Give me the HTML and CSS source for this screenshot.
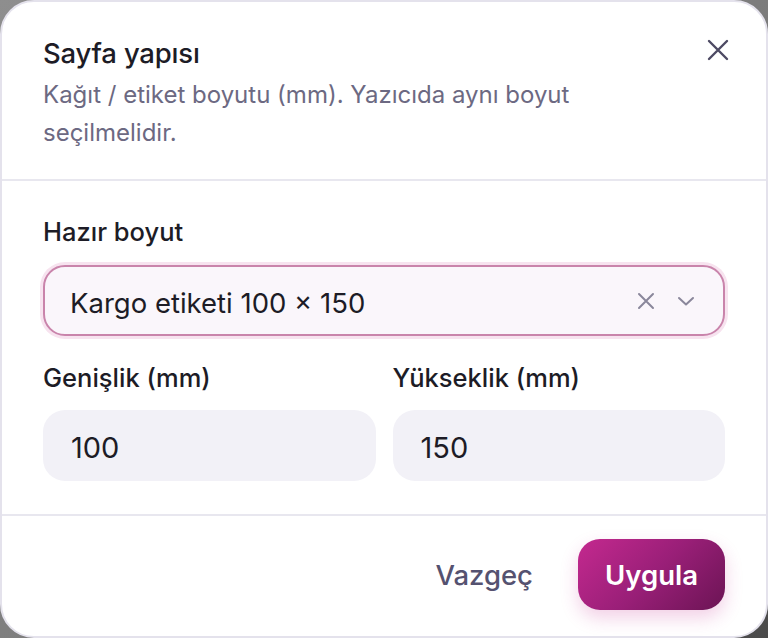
FILE: index.html
```html
<!DOCTYPE html>
<html lang="tr">
<head>
<meta charset="utf-8">
<title>Sayfa yapısı</title>
<link rel="stylesheet" href="styles.css">
</head>
<body>
<div class="dialog">
  <header class="dlg-head">
    <div class="head-text">
      <h2 class="title">Sayfa yapısı</h2>
      <p class="subtitle">Kağıt / etiket boyutu (mm). Yazıcıda aynı boyut seçilmelidir.</p>
    </div>
    <button class="close" aria-label="Kapat">
      <svg width="22" height="22" viewBox="0 0 22 22"><path d="M2 2L20 20M20 2L2 20" stroke="#4d4a63" stroke-width="2.4" stroke-linecap="round" fill="none"/></svg>
    </button>
  </header>
  <section class="dlg-body">
    <label class="label">Hazır boyut</label>
    <div class="select">
      <span class="select-value">Kargo etiketi 100 × 150</span>
      <span class="select-icons">
        <svg width="18" height="18" viewBox="0 0 18 18"><path d="M2 2L16 16M16 2L2 16" stroke="#8a879b" stroke-width="2" stroke-linecap="round" fill="none"/></svg>
        <svg width="18" height="10" viewBox="0 0 18 10"><path d="M2 2L9 8.5L16 2" stroke="#8a879b" stroke-width="2" stroke-linecap="round" stroke-linejoin="round" fill="none"/></svg>
      </span>
    </div>
    <div class="row">
      <div class="field">
        <label class="label">Genişlik (mm)</label>
        <div class="input">100</div>
      </div>
      <div class="field">
        <label class="label">Yükseklik (mm)</label>
        <div class="input">150</div>
      </div>
    </div>
  </section>
  <footer class="dlg-foot">
    <button class="btn-cancel">Vazgeç</button>
    <button class="btn-apply">Uygula</button>
  </footer>
</div>
</body>
</html>
```
FILE: styles.css
```css
* { box-sizing: border-box; }
html, body { margin: 0; padding: 0; }
body {
  width: 768px;
  height: 638px;
  background: linear-gradient(135deg, #8e8e8e 0%, #7a7a7a 60%, #4a4a4a 100%);
  font-family: Inter, "Noto Sans", sans-serif;
  overflow: hidden;
}
.dialog {
  width: 768px;
  height: 638px;
  background: #ffffff;
  border: 2px solid #e4e2ec;
  border-radius: 34px;
  display: flex;
  flex-direction: column;
  overflow: hidden;
}
.dlg-head {
  display: flex;
  justify-content: space-between;
  align-items: flex-start;
  padding: 34px 38px 0 41px;
  height: 179px;
  border-bottom: 2px solid #e8e7ef;
}
.head-text { width: 600px; }
.title {
  margin: 0;
  font-size: 27.5px;
  line-height: 34px;
  font-weight: 500;
  color: #1d1c26;
  letter-spacing: -0.2px;
}
.subtitle {
  margin: 6px 0 0;
  font-size: 24px;
  line-height: 38px;
  color: #6c6982;
  font-weight: 400;
}
.close {
  margin-top: 3px;
  margin-right: -1px;
  background: none;
  border: 0;
  padding: 0;
  width: 22px;
  height: 22px;
  display: flex;
}
.dlg-body {
  padding: 36px 41px 0 41px;
  height: 335px;
  border-bottom: 2px solid #e8e7ef;
}
.label {
  display: block;
  font-size: 25.5px;
  line-height: 30px;
  font-weight: 500;
  color: #1d1c26;
}
.select {
  margin-top: 18px;
  height: 71px;
  border: 2px solid #c984ab;
  border-radius: 22px;
  background: #faf6fb;
  box-shadow: 0 0 0 3px #f7e3ef;
  display: flex;
  align-items: center;
  justify-content: space-between;
  padding: 4px 28px 0 25px;
}
.select-value {
  font-size: 27.5px;
  color: #1d1c26;
}
.select-icons {
  display: flex;
  align-items: center;
  gap: 22px;
  margin-top: -4px;
}
.row {
  margin-top: 27px;
  display: grid;
  grid-template-columns: 1fr 1fr;
  gap: 17px;
}
.input {
  margin-top: 17px;
  height: 71px;
  border-radius: 22px;
  background: #f2f1f7;
  display: flex;
  align-items: center;
  padding: 3px 28px 0;
  font-size: 29px;
  color: #1d1c26;
}
.dlg-foot {
  flex: 1;
  display: flex;
  justify-content: flex-end;
  align-items: flex-start;
  padding: 23px 41px 0;
  gap: 45px;
}
.btn-cancel {
  height: 71px;
  background: none;
  border: 0;
  padding: 0;
  font-family: inherit;
  font-size: 27.5px;
  font-weight: 500;
  color: #555270;
}
.btn-apply {
  width: 147px;
  height: 71px;
  border: 0;
  border-radius: 22px;
  background: linear-gradient(135deg, #c4298f 0%, #9a1f78 50%, #6b1454 100%);
  box-shadow: 0 8px 18px rgba(196, 40, 140, 0.22);
  font-family: inherit;
  font-size: 27.5px;
  font-weight: 600;
  color: #ffffff;
}
```
